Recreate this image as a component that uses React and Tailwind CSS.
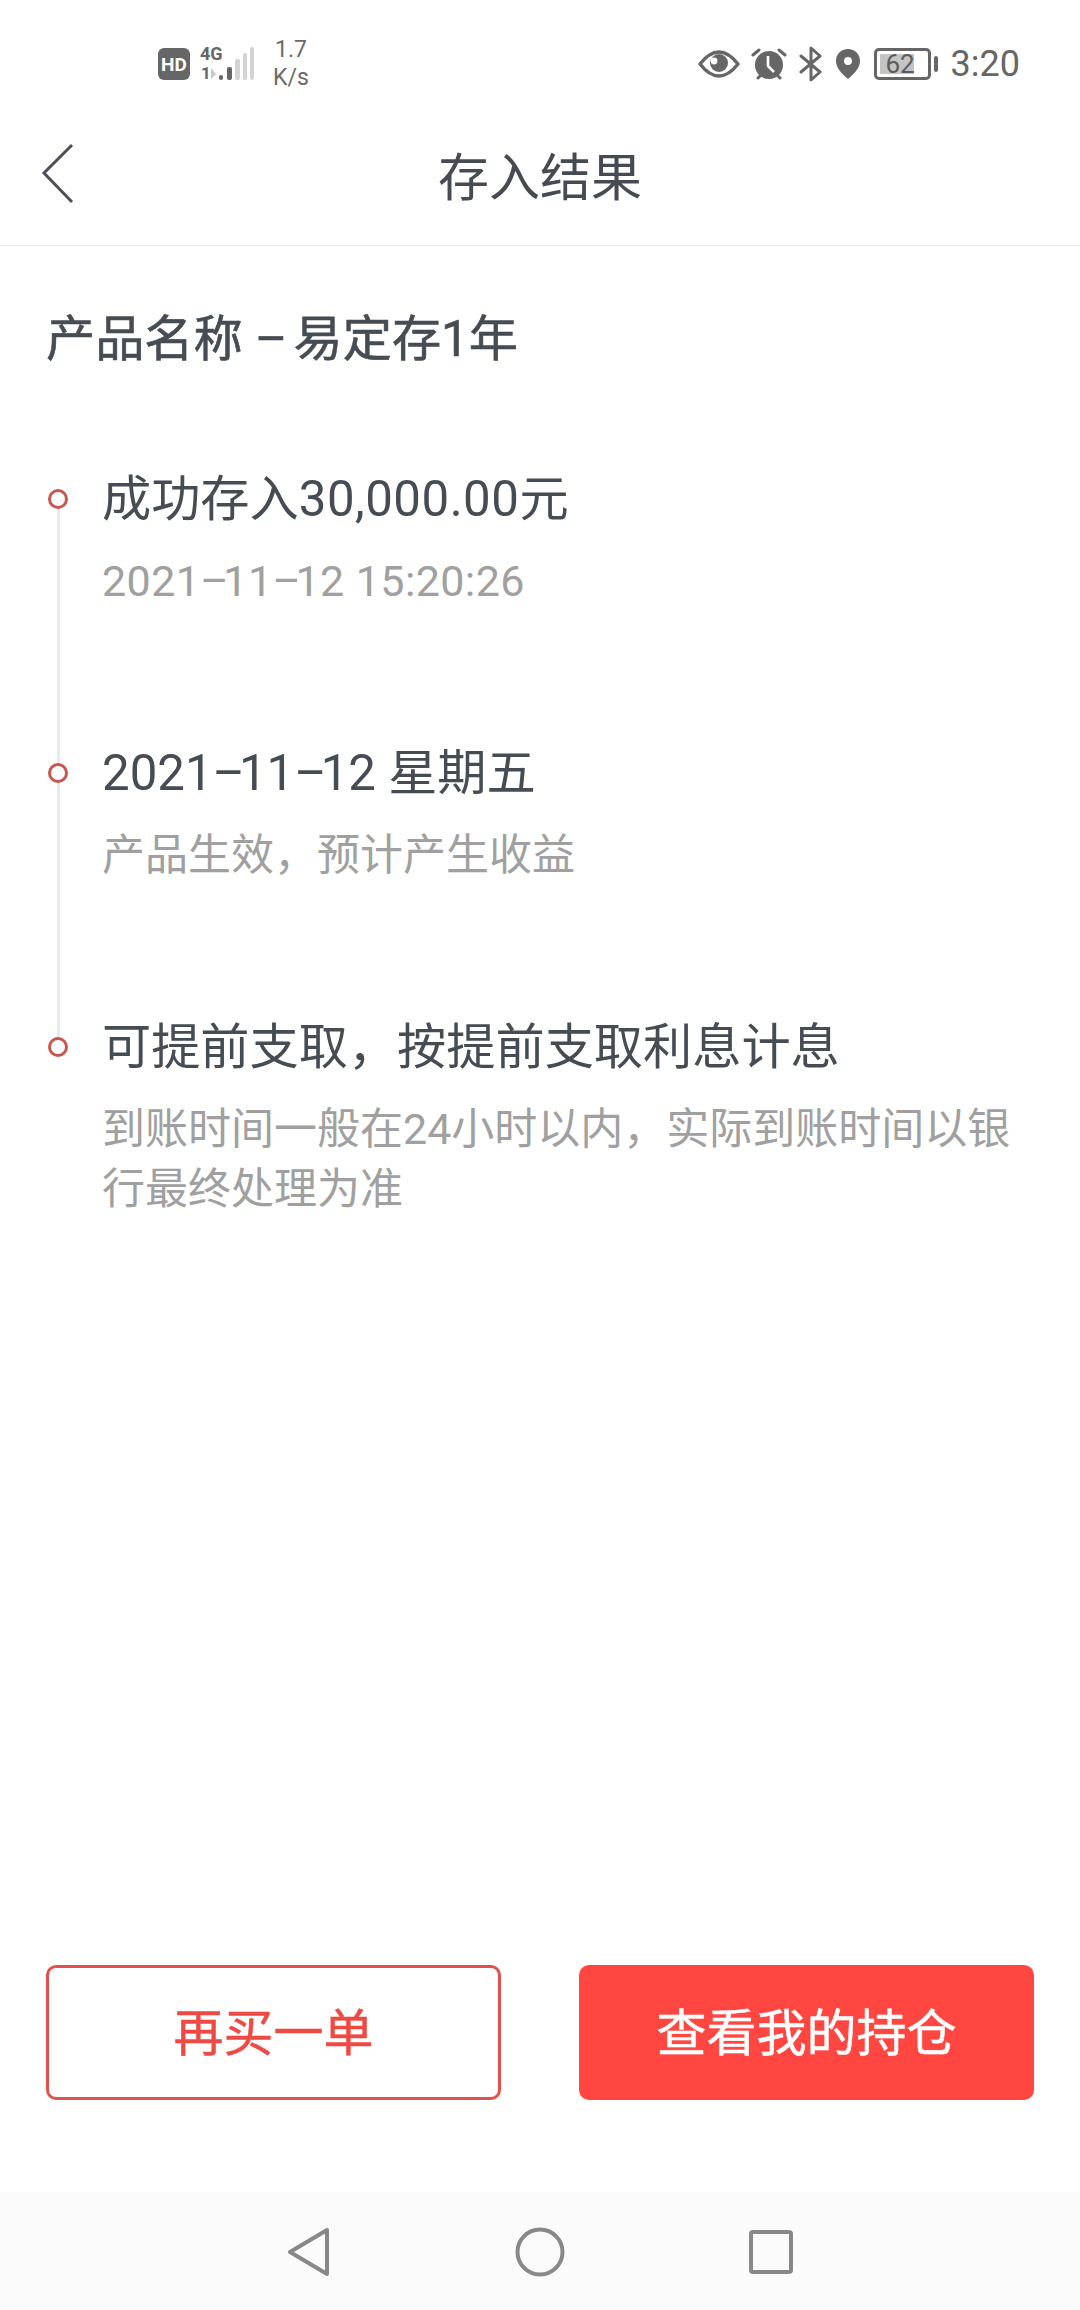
function Dash() {
  return <span className="tracking-[-0.12em]">–</span>;
}

function Item({ title, children, last }) {
  return (
    <div className={`relative flex gap-[34px] ${last ? "" : "pb-[132px]"}`}>
      {!last && <div className="absolute left-[11px] top-[30px] bottom-[-30px] w-[3px] bg-[#eaeaec]" />}
      <div className="relative ml-[2px] mt-[20px] h-[20px] w-[20px] shrink-0 rounded-full border-[3px] border-[#c9564f] bg-white" />
      <div className="flex-1">
        <div className="text-[49.2px] leading-[60px] text-[#454c54]">{title}</div>
        <div className="mt-[22px] text-[43px] leading-[60px] text-[#a0a0a0]">{children}</div>
      </div>
    </div>
  );
}

function StatusBar() {
  return (
    <div className="flex h-[120px] items-center justify-between pl-[158px] pr-[60px] pt-[8px] text-[#666]">
      <div className="flex items-center gap-[10px]">
        <div className="flex h-[32px] w-[32px] items-center justify-center rounded-[6px] bg-[#666] text-[19px] font-bold leading-none text-white">HD</div>
        <div className="relative h-[34px] w-[56px]">
          <span className="absolute left-0 top-[-3px] text-[18px] font-bold leading-[19px]">4G</span>
          <span className="absolute left-[1px] top-[17px] text-[17px] font-bold leading-[18px]">1</span>
          <svg className="absolute left-0 top-0" width="56" height="34" viewBox="0 0 56 34">
            <path d="M11 21v11l5-5z" fill="#c8c8c8" />
            <rect x="19" y="28" width="4" height="5" rx="2" fill="#666" />
            <rect x="27" y="20" width="5" height="13" rx="2" fill="#666" />
            <rect x="35" y="12" width="5" height="21" rx="2" fill="#d4d4d4" />
            <rect x="43" y="6" width="4" height="27" rx="2" fill="#d4d4d4" />
            <rect x="50" y="0" width="4" height="33" rx="2" fill="#d4d4d4" />
          </svg>
        </div>
        <div className="ml-[7px] flex flex-col items-start text-[23px] leading-[28px] text-[#6a6a6a]">
          <span className="pl-[2px]">1.7</span>
          <span>K/s</span>
        </div>
      </div>
      <div className="flex items-center">
        <svg width="42" height="28" viewBox="0 0 42 28" fill="none">
          <path d="M2 14C9 5 15 2 21 2s12 3 19 12c-7 9-13 12-19 12S9 23 2 14z" stroke="#666" strokeWidth="3.4" strokeLinejoin="round" />
          <circle cx="21" cy="13" r="9" fill="#666" />
          <circle cx="16" cy="11" r="3.4" fill="#fff" />
        </svg>
        <svg className="ml-[11px]" width="36" height="34" viewBox="0 0 36 34" fill="none">
          <circle cx="18" cy="18" r="14" fill="#666" />
          <path d="M17 9v10l6 6" stroke="#fff" strokeWidth="2.6" />
          <path d="M2 8l6-5M34 8l-6-5M7 31l3-3M29 31l-3-3" stroke="#666" strokeWidth="3" strokeLinecap="round" />
        </svg>
        <svg className="ml-[12px]" width="24" height="36" viewBox="0 0 24 36" fill="none">
          <path d="M2 10l19 16-9 8V2l9 8L2 26" stroke="#666" strokeWidth="3" strokeLinejoin="round" strokeLinecap="round" />
        </svg>
        <svg className="ml-[12px]" width="26" height="32" viewBox="0 0 26 32">
          <path fillRule="evenodd" d="M13 1c7 0 12 5 12 12 0 7-6 13-12 18C7 26 1 20 1 13 1 6 6 1 13 1zm0 8a4 4 0 100 8 4 4 0 000-8z" fill="#666" />
        </svg>
        <div className="ml-[13px] flex items-center gap-[3px]">
          <div className="relative h-[32px] w-[57px] rounded-[5px] border-[3px] border-[#666] p-[3px]">
            <div className="h-full w-[76%] bg-[#c4c4c4]" />
            <span className="absolute inset-0 flex items-center justify-center pr-[4px] text-[26px] leading-none text-[#5c5c5c]">62</span>
          </div>
          <div className="h-[16px] w-[4px] rounded-[2px] bg-[#666]" />
        </div>
        <span className="ml-[13px] text-[36px] leading-none text-[#666]">3:20</span>
      </div>
    </div>
  );
}

export default function App() {
  return (
    <div className="flex h-[2310px] w-[1080px] flex-col bg-white font-['Roboto','Noto_Sans_CJK_SC',sans-serif]">
      <StatusBar />
      <div className="relative flex h-[126px] shrink-0 items-center justify-center border-b-[1px] border-[#e6e6e6] pb-[9px]">
        <svg className="absolute left-[40px] top-[22px]" width="36" height="62" viewBox="0 0 36 62" fill="none">
          <path d="M32 3L4 31l28 29" stroke="#4e4e58" strokeWidth="3" />
        </svg>
        <span className="text-[51px] leading-none text-[#464a52]">存入结果</span>
      </div>
      <div className="flex-1 px-[46px]">
        <div className="mt-[63px] text-[49.2px] leading-[60px] text-[#454c54] [-webkit-text-stroke:0.6px_#454c54]">产品名称 <Dash /> 易定存1年</div>
        <div className="mt-[100px] pr-[12px]">
          <Item title={<>成功存入<span className="tracking-[0.5px]">30,000.00</span>元</>}><span className="tracking-[0.4px]">2021<Dash />11<Dash />12 15:20:26</span></Item>
          <Item title={<>2021<Dash />11<Dash />12 星期五</>}>产品生效，预计产生收益</Item>
          <Item title="可提前支取，按提前支取利息计息" last>到账时间一般在24小时以内，实际到账时间以银行最终处理为准</Item>
        </div>
      </div>
      <div className="flex justify-between px-[46px] pb-[92px]">
        <div className="flex h-[135px] w-[455px] items-center justify-center rounded-[10px] border-[3px] border-[#e2514c] pt-[3px] text-[50px] text-[#ee4a44] [-webkit-text-stroke:0.5px_#ee4a44]">再买一单</div>
        <div className="flex h-[135px] w-[455px] items-center justify-center rounded-[10px] bg-[#ff4640] pt-[3px] text-[50px] text-white [-webkit-text-stroke:0.5px_#ffffff]">查看我的持仓</div>
      </div>
      <div className="flex h-[118px] items-center justify-center gap-[184px] bg-[#fbfbfb] pt-[2px]">
        <svg width="44" height="50" viewBox="0 0 44 50" fill="none">
          <path d="M40 3L3 25l37 22z" stroke="#888" strokeWidth="4" strokeLinejoin="round" />
        </svg>
        <svg width="50" height="50" viewBox="0 0 50 50" fill="none">
          <circle cx="25" cy="25" r="22.5" stroke="#888" strokeWidth="4" />
        </svg>
        <svg width="44" height="44" viewBox="0 0 44 44" fill="none">
          <rect x="2" y="2" width="40" height="40" rx="2" stroke="#888" strokeWidth="4" />
        </svg>
      </div>
    </div>
  );
}
